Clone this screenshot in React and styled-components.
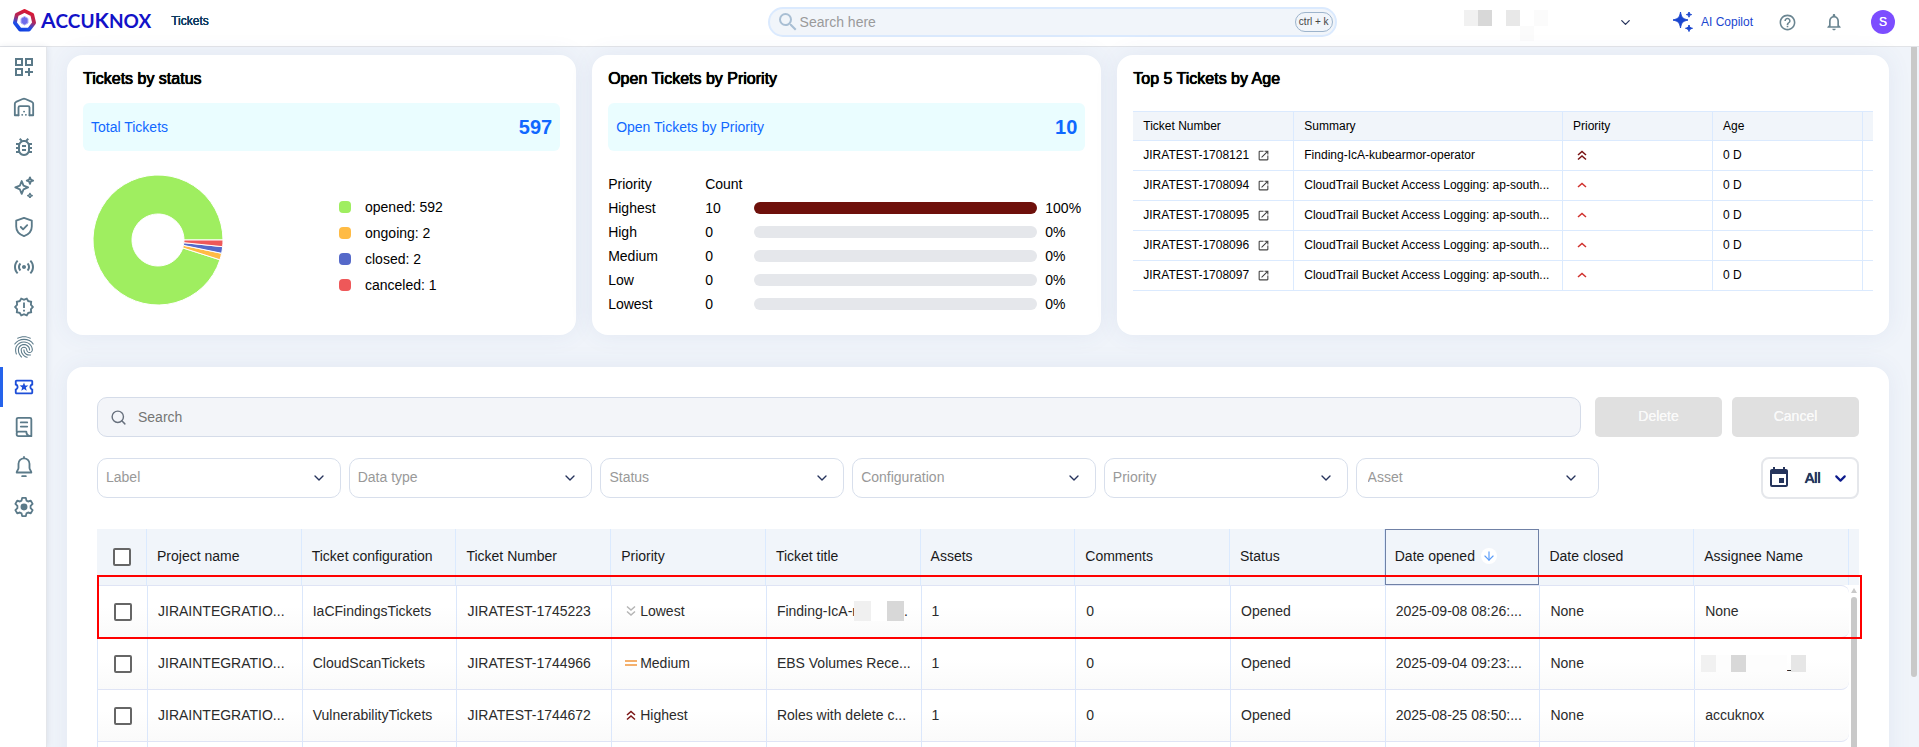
import React from "react";
import styled, { createGlobalStyle } from "styled-components";
import {
  MdOutlineDashboardCustomize,
  MdOutlineBugReport,
  MdSensors,
  MdOutlineNewReleases,
  MdFingerprint,
  MdOutlineLocalActivity,
  MdSearch,
  MdHelpOutline,
  MdNotificationsNone,
  MdOpenInNew,
  MdEvent,
} from "react-icons/md";
import { ChevronDown, Search, ArrowDown } from "lucide-react";

const GlobalStyle = createGlobalStyle`
  *, *::before, *::after { box-sizing: border-box; }
  body {
    margin: 0;
    font-family: "Liberation Sans", Arial, sans-serif;
    font-size: 14px;
    color: #000;
    background: #f0f4fa;
  }
  button, input, select { font: inherit; }
`;

const Page = styled.div`
  display: flex;
  flex-direction: column;
  height: 100vh;
  overflow: hidden;
`;

/* ---------- top bar ---------- */

const TopBar = styled.header`
  display: flex;
  align-items: center;
  flex: none;
  height: 47px;
  padding-bottom: 2px;
  background: #fff;
  border-bottom: 1px solid #e2e4e8;
`;

const BrandArea = styled.div`
  display: flex;
  align-items: center;
  width: 40%;
  padding: 0 0 3px 12px;
`;

const Brand = styled.a`
  display: flex;
  align-items: center;
  gap: 4px;
  color: #1212c8;
  text-decoration: none;
`;

const BrandName = styled.span`
  font: 700 19px/24px Lato, sans-serif;
`;

const BigCap = styled.span`
  font-size: 21px;
`;

const Crumb = styled.span`
  margin-left: 20px;
  font-size: 12px;
  color: #0b3a5e;
  text-shadow: 0 0 0 currentColor, 0 0 0 currentColor;
`;

const GlobalSearch = styled.label`
  display: flex;
  align-items: center;
  flex: 0 1 569px;
  height: 30px;
  padding: 0 2px 0 6px;
  border: 2px solid #dbeafe;
  border-radius: 15px;
  background: #f1f5fa;
  color: #a9bfd4;
`;

const BareInput = styled.input`
  flex: 1;
  min-width: 0;
  padding: 0;
  border: 0;
  outline: 0;
  background: transparent;
  color: #222;
  font-size: 14px;
  &::placeholder {
    color: ${(p) => p.$hint};
    opacity: 1;
  }
`;

const Shortcut = styled.kbd`
  height: 20px;
  padding: 0 3px;
  border: 1px solid #9db4cc;
  border-radius: 10px;
  font: 10px/17px "Liberation Sans", Arial, sans-serif;
  color: #444;
`;

const TopRight = styled.div`
  display: flex;
  align-items: center;
  justify-content: flex-end;
  flex: 1;
  padding-right: 24px;
`;

const PlainButton = styled.button`
  display: flex;
  align-items: center;
  padding: 0;
  border: 0;
  background: none;
  cursor: pointer;
  color: ${(p) => p.$color || "#6a8591"};
`;

const Tenant = styled(PlainButton)`
  gap: 70px;
  margin-right: 40px;
`;

const Mosaic = styled.span`
  display: grid;
  grid-template-columns: repeat(6, 14px);
  grid-template-rows: 16px 15px;
  gap: 0;
  margin-top: 7px;
`;

const Tile = styled.span`
  grid-column: ${(p) => p.$col};
  grid-row: ${(p) => p.$row || 1};
  background: ${(p) => p.$tone};
`;

const Copilot = styled(PlainButton)`
  gap: 8px;
  margin-right: 25px;
  font-size: 12px;
`;

const IconGroup = styled.div`
  display: flex;
  align-items: center;
  gap: 27px;
`;

const Avatar = styled.button`
  width: 24px;
  height: 24px;
  padding: 0;
  border: 0;
  border-radius: 50%;
  background: #7c4dff;
  color: #fff;
  font-size: 12px;
  text-shadow: 0 0 0 currentColor;
`;

/* ---------- shell ---------- */

const Body = styled.div`
  display: flex;
  flex: 1;
  min-height: 0;
`;

const SideNav = styled.nav`
  display: flex;
  flex-direction: column;
  flex: none;
  width: 47px;
  background: #fff;
  border-right: 1px solid #e4e6ea;
  box-shadow: 0 0 6px rgba(40, 60, 100, 0.12);
`;

const NavItem = styled.a`
  display: flex;
  align-items: center;
  justify-content: center;
  height: 40px;
  padding-right: 2px;
  border-left: 3px solid ${(p) => (p.$active ? "#2563eb" : "transparent")};
  color: ${(p) => (p.$active ? "#1d4ed8" : "#5b7a89")};
`;

const Main = styled.main`
  display: flex;
  flex-direction: column;
  gap: 32px;
  flex: 1;
  min-width: 0;
  padding: 8px 22px 0 20px;
`;

const PageScroll = styled.div`
  flex: none;
  width: 8px;
  padding-right: 2px;
`;

const PageThumb = styled.div`
  height: 90%;
  border-radius: 0 0 3px 3px;
  background: #c9c9c9;
`;

const Cards = styled.div`
  display: grid;
  grid-template-columns: repeat(7, minmax(0, 1fr));
  gap: 16px;
`;

const Panel = styled.section`
  background: #fff;
  border-radius: 16px;
  box-shadow: 0 0 24px rgba(70, 90, 150, 0.08);
`;

const Card = styled(Panel)`
  grid-column: span ${(p) => p.$span};
  min-height: 280px;
  padding: 16px;
`;

const CardTitle = styled.h2`
  margin: 0;
  font-size: 16px;
  line-height: 16px;
  font-weight: 400;
  text-shadow: 0 0 0 currentColor, 0 0 0 currentColor, 0 0 1px currentColor;
`;

const Band = styled.div`
  display: flex;
  align-items: center;
  justify-content: space-between;
  height: 48px;
  margin-top: 16px;
  padding: 0 8px;
  border-radius: 6px;
  background: #eafdff;
  color: #1068ff;
`;

const BandTotal = styled.strong`
  font-size: 20px;
  font-weight: 700;
`;

const ChartRow = styled.div`
  display: flex;
  margin-top: 24px;
  padding-left: 10px;
  gap: 116px;
`;

const Legend = styled.ul`
  margin: 0;
  padding: 19px 0 0;
  list-style: none;
`;

const LegendItem = styled.li`
  display: flex;
  align-items: center;
  gap: 14px;
  height: 26px;
`;

const Swatch = styled.span`
  width: 12px;
  height: 12px;
  border-radius: 4px;
  background: ${(p) => p.$color};
`;

const PriorityTable = styled.table`
  width: 100%;
  margin-top: 21px;
  table-layout: fixed;
  border-spacing: 0;
  th, td {
    height: 24px;
    padding: 0;
    text-align: left;
    font-weight: 400;
  }
`;

const Col = styled.col`
  width: ${(p) => p.$w};
`;

const Track = styled.div`
  height: 12px;
  border-radius: 6px;
  background: #e5e7eb;
  overflow: hidden;
`;

const Fill = styled.div`
  height: 100%;
  background: #6e100b;
`;

const AgeTable = styled.table`
  width: 100%;
  margin-top: 24px;
  table-layout: fixed;
  border-spacing: 0;
  border-top: 1px solid #dbeafe;
  font-size: 12px;
  th, td {
    height: 30px;
    padding: 0 0 1px 10px;
    border-right: 1px solid #dbeafe;
    border-bottom: 1px solid #dbeafe;
    text-align: left;
    font-weight: 400;
    white-space: nowrap;
  }
  th { height: 29px; background: #f1f5fa; }
  th:last-child, td:last-child { border-right: 0; padding: 0; }
`;

const TicketLink = styled.a`
  display: flex;
  align-items: center;
  gap: 8px;
  color: #000;
  text-decoration: none;
  svg { color: #444; }
`;

/* ---------- ticket list ---------- */

const ListPanel = styled(Panel)`
  flex: none;
  padding: 30px;
`;

const SearchRow = styled.div`
  display: flex;
  gap: 10px;
`;

const ListSearch = styled.label`
  display: flex;
  align-items: center;
  gap: 11px;
  flex: 1;
  height: 40px;
  margin-right: 4px;
  padding: 0 12px;
  border: 1px solid #d5dce9;
  border-radius: 10px;
  background: #f3f5f9;
  color: #67707d;
`;

const ActionButton = styled.button`
  width: 127px;
  height: 40px;
  padding-bottom: 3px;
  border: 0;
  border-radius: 5px;
  background: #e0e0e0;
  color: #fafafa;
  text-shadow: 0 0 0 currentColor;
`;

const FilterRow = styled.div`
  display: grid;
  grid-template-columns: repeat(7, minmax(0, 1fr));
  align-items: center;
  margin-top: 20px;
`;

const SelectBox = styled.div`
  display: grid;
  grid-template-columns: 1fr ${(p) => p.$inset};
  align-items: center;
  margin-right: 8px;
  color: #26335c;
  svg { grid-area: 1 / 2; pointer-events: none; }
`;

const Select = styled.select`
  grid-area: 1 / 1 / 2 / 3;
  width: 100%;
  height: 40px;
  padding: 0 ${(p) => p.$pad} 2px;
  border: 1px solid #d8dfec;
  border-radius: 10px;
  appearance: none;
  background: #fff;
  color: #999;
`;

const RangeButton = styled.button`
  display: flex;
  align-items: center;
  justify-self: end;
  width: 98px;
  height: 42px;
  padding: 0 8px 0 4px;
  border: 2px solid #e5e7eb;
  border-radius: 8px;
  background: #fff;
  color: #25345c;
  text-shadow: 0 0 0 currentColor, 0 0 0 currentColor, 0 0 1px currentColor;
`;

const RangeText = styled.span`
  flex: 1;
  padding-left: 14px;
  text-align: left;
`;

const TableWrap = styled.div`
  position: relative;
  margin-top: 30px;
`;

const TicketTable = styled.table`
  width: 100%;
  table-layout: fixed;
  border-spacing: 0;
  th, td {
    padding: 0 0 0 10px;
    text-align: left;
    font-weight: 400;
    white-space: nowrap;
  }
  th {
    height: 56px;
    padding-bottom: 2px;
    background: #f1f5fa;
    border-right: 1px solid #dbeafe;
    color: #1a1a1a;
  }
  th:last-child { border-right: 0; padding: 0; }
  td {
    height: 52px;
    padding-bottom: 1px;
    border-left: 1px solid #dbe7fb;
    border-bottom: 1px solid #dfe4f5;
    background: linear-gradient(#fff 40%, #fafafa);
    color: #2b2b2b;
  }
  tbody tr:first-child td { border-top: 1px solid #dfe4f5; height: 53px; }
  th:first-child, td:first-child { padding: 0 0 0 16px; }
  td:nth-last-child(2) { border-radius: 0 8px 8px 0; }
  tbody tr td:last-child { border: 0; padding: 0; background: #fff; }
`;

const SortedTh = styled.th`
  outline: 1px solid #7081a6;
  outline-offset: -1px;
`;

const SortLabel = styled.span`
  display: flex;
  align-items: center;
  gap: 6px;
`;

const SortDot = styled.span`
  display: flex;
  align-items: center;
  justify-content: center;
  width: 16px;
  height: 16px;
  border-radius: 50%;
  background: #fff;
  color: #5a9cf8;
`;

const Tick = styled.input`
  display: block;
  width: 18px;
  height: 18px;
  margin: 0;
  appearance: none;
  border: 2px solid #666;
  border-radius: 2px;
  background: #fff;
`;

const PriorityCell = styled.span`
  display: flex;
  align-items: center;
  gap: 3px;
  padding-left: 3px;
`;

const Redacted = styled.span`
  display: flex;
  align-items: center;
`;

const CoverTile = styled.span`
  position: relative;
  flex: none;
  width: ${(p) => p.$w};
  height: ${(p) => p.$h};
  margin-left: ${(p) => p.$lap || "0"};
  background: ${(p) => p.$tone};
`;

const RowMarker = styled.div`
  position: absolute;
  top: 46px;
  left: 0;
  right: -3px;
  height: 64px;
  border: 2px solid #f00;
  pointer-events: none;
`;

const ListScroll = styled.div`
  position: absolute;
  top: 59px;
  right: 2px;
  bottom: 0;
  width: 6px;
  display: flex;
  flex-direction: column;
  gap: 4px;
`;

const ListThumb = styled.div`
  flex: 1;
  border-radius: 3px;
  background: #c9c9c9;
`;

const ScrollArrow = styled.div`
  border: 3px solid transparent;
  border-top: 0;
  border-bottom: 5px solid #c9c9c9;
`;

/* ---------- drawings ---------- */

const Line = ({ size = 22, w = 2, children }) => (
  <svg width={size} height={size} viewBox="0 0 24 24" fill="none" stroke="currentColor" strokeWidth={w} strokeLinecap="round" strokeLinejoin="round" aria-hidden="true">
    {children}
  </svg>
);

const Garage = () => (
  <Line w={2}>
    <path d="M6 21H2V8.500C2 7.600 2.500 6.900 3.300 6.500L10.500 3.300a4 4 0 0 1 3 0L20.700 6.500C21.500 6.900 22 7.600 22 8.500V21h-4" />
    <path d="M6 21v-8.500A1.500 1.500 0 0 1 7.500 11h9a1.500 1.500 0 0 1 1.500 1.500V21" />
    <path d="M10 20.500h.1M14 20.500h.1M12 17h.1" />
  </Line>
);

const Sparkles = () => (
  <Line w={2}>
    <path d="M9.500 5.500l2 5 5 2-5 2-2 5-2-5-5-2 5-2z" />
    <path d="M18.500 1.500l1 2.500 2.500 1-2.500 1-1 2.500-1-2.500-2.500-1 2.500-1z" />
    <path d="M18.500 19l.8 1.700 1.700.8-1.700.8-.8 1.700-.8-1.700-1.700-.8 1.700-.8z" strokeWidth="1.500" />
  </Line>
);

const Shield = () => (
  <Line w={2}>
    <path d="M12 2l8.500 3v6.500c0 5-3.500 8.700-8.500 10.500-5-1.800-8.500-5.500-8.500-10.500V5z" />
    <path d="M8.500 12l2.500 2.500 4.500-4.500" />
  </Line>
);

const Report = () => (
  <Line w={2}>
    <path d="M4 17V3.500A1.500 1.500 0 0 1 5.500 2h13A1.500 1.500 0 0 1 20 3.500V22H6a2 2 0 0 1-2-2v-1a2 2 0 0 1 2-2h8.500c0 3 2 5 5.500 5" />
    <path d="M8.500 7h7M8.500 11.500h7" />
  </Line>
);

const NavBell = () => (
  <Line w={2}>
    <path d="M12 1v1.500M12 2.500a6 6 0 0 0-6 6V13c0 2-2 3-2 5h16c0-2-2-3-2-5V8.500a6 6 0 0 0-6-6zM10 22h4" />
  </Line>
);

const Gear = () => (
  <Line w={2}>
    <path d="M10 2h4l.7 3 1.800 1 2.900-.9 2 3.500-2.200 2.100v2.600l2.200 2.100-2 3.500-2.900-.9-1.800 1-.7 3h-4l-.7-3-1.800-1-2.900.9-2-3.500 2.200-2.100v-2.600L2.600 8.600l2-3.500 2.900.9 1.800-1z" />
    <circle cx="12" cy="12" r="2.800" fill="currentColor" />
  </Line>
);

const CopilotMark = () => (
  <svg width="20" height="20" viewBox="0 0 20 20" fill="currentColor" aria-hidden="true">
    <path d="M7.500 0C8.300 5 9.500 6.700 15 8 9.500 9.300 8.300 11 7.500 16 6.700 11 5.500 9.300 0 8 5.500 6.700 6.700 5 7.500 0z" stroke="currentColor" strokeLinejoin="round" />
    <path d="M16 0c.4 1.700.9 2.200 2.600 2.600C16.900 3 16.400 3.500 16 5.200 15.600 3.500 15.100 3 13.400 2.600 15.100 2.200 15.600 1.700 16 0z" stroke="currentColor" strokeLinejoin="round" />
    <path d="M16 13c.6 2.200 1.200 2.800 3.500 3.300-2.300.5-2.900 1.100-3.500 3.200-.6-2.100-1.200-2.700-3.500-3.200 2.300-.5 2.900-1.100 3.500-3.300z" stroke="currentColor" strokeLinejoin="round" />
  </svg>
);

const Logo = () => (
  <svg width="25" height="25" viewBox="0 0 25 25" fill="none" aria-hidden="true">
    <defs>
      <linearGradient id="ring" x1="17" y1="2" x2="9" y2="23" gradientUnits="userSpaceOnUse">
        <stop offset="0" stopColor="#e0142c" />
        <stop offset="0.45" stopColor="#b0285c" />
        <stop offset="0.75" stopColor="#1f4fe8" />
        <stop offset="1" stopColor="#0f3fe0" />
      </linearGradient>
    </defs>
    <path d="M12.500 2.900l7.700 3.700 1.900 8.200-5.200 6.900H8.100l-5.200-6.900 1.900-8.200z" stroke="url(#ring)" strokeWidth="3.800" strokeLinejoin="round" />
    <path d="M12.500 8.500l3.500 2v4.500l-3.500 2-3.500-2v-4.500z" fill="#6f6bea" stroke="#b3b0f6" strokeWidth="1" />
  </svg>
);

const priorityMarks = {
  Highest: { color: "#7a1414", d: ["M2 6l4-3.500L10 6", "M2 10.500L6 7l4 3.500"] },
  High: { color: "#d0312d", d: ["M2 8l4-3.500L10 8"] },
  Medium: { color: "#f0963c", d: ["M0 4h12", "M0 8h12"] },
  Lowest: { color: "#b5b5b5", d: ["M2 1.500L6 5l4-3.500", "M2 6.500L6 10l4-3.500"] },
};

const PriorityMark = ({ level }) => (
  <svg width="12" height="12" viewBox="0 0 12 12" fill="none" stroke={priorityMarks[level].color} strokeWidth="1.500" role="img" aria-label={level}>
    {priorityMarks[level].d.map((d) => (
      <path key={d} d={d} />
    ))}
  </svg>
);

const point = (r, deg) => {
  const a = (deg * Math.PI) / 180;
  return `${65 + r * Math.cos(a)} ${65 + r * Math.sin(a)}`;
};

const arc = (from, to) => {
  const large = to - from > 180 ? 1 : 0;
  return `M${point(65, from)}A65 65 0 ${large} 1 ${point(65, to)}L${point(26, to)}A26 26 0 ${large} 0 ${point(26, from)}Z`;
};

/* ---------- data ---------- */

const statuses = [
  { label: "opened: 592", color: "#9fee60", from: 17.7, to: 360 },
  { label: "ongoing: 2", color: "#ffbb44", from: 11.8, to: 17.7 },
  { label: "closed: 2", color: "#5569c9", from: 5.9, to: 11.8 },
  { label: "canceled: 1", color: "#ee5859", from: 0, to: 5.9 },
];

const priorities = [
  ["Highest", 10, 100],
  ["High", 0, 0],
  ["Medium", 0, 0],
  ["Low", 0, 0],
  ["Lowest", 0, 0],
];

const trail = "CloudTrail Bucket Access Logging: ap-south...";
const oldest = [
  ["JIRATEST-1708121", "Finding-IcA-kubearmor-operator", "Highest"],
  ["JIRATEST-1708094", trail, "High"],
  ["JIRATEST-1708095", trail, "High"],
  ["JIRATEST-1708096", trail, "High"],
  ["JIRATEST-1708097", trail, "High"],
];

const navItems = [
  ["Dashboard", <MdOutlineDashboardCustomize size={24} />],
  ["Inventory", <Garage />],
  ["Issues", <MdOutlineBugReport size={24} />],
  ["AI security", <Sparkles />],
  ["Compliance", <Shield />],
  ["Runtime", <MdSensors size={24} />],
  ["Alerts", <MdOutlineNewReleases size={22} />],
  ["Identity", <MdFingerprint size={26} />],
  ["Tickets", <MdOutlineLocalActivity size={22} />],
  ["Reports", <Report />],
  ["Notifications", <NavBell />],
  ["Settings", <Gear />],
];

const filters = ["Label", "Data type", "Status", "Configuration", "Priority", "Asset"];

const project = "JIRAINTEGRATIO...";
const tickets = [
  [project, "IaCFindingsTickets", "JIRATEST-1745223", "Lowest", null, "2025-09-08 08:26:...", "None"],
  [project, "CloudScanTickets", "JIRATEST-1744966", "Medium", "EBS Volumes Rece...", "2025-09-04 09:23:...", null],
  [project, "VulnerabilityTickets", "JIRATEST-1744672", "Highest", "Roles with delete c...", "2025-08-25 08:50:...", "accuknox"],
];

const HiddenTitle = () => (
  <Redacted>
    Finding-IcA-r
    <CoverTile $w="17px" $h="20px" $lap="-3px" $tone="#f0f0f0" />
    <CoverTile $w="16px" $h="20px" $tone="#fff" />
    <CoverTile $w="17px" $h="20px" $tone="#d8d8d8" />
    .
  </Redacted>
);

const HiddenName = () => (
  <Redacted>
    <CoverTile $w="15px" $h="17px" $lap="-4px" $tone="#f1f1f1" />
    <CoverTile $w="15px" $h="17px" $tone="#fdfdfd" />
    <CoverTile $w="15px" $h="17px" $tone="#d8d8d8" />
    <CoverTile $w="41px" $h="17px" $tone="#fdfdfd" />
    _
    <CoverTile $w="15px" $h="17px" $lap="-4px" $tone="#e6e6e6" />
  </Redacted>
);

export default function App() {
  return (
    <Page>
      <GlobalStyle />
      <TopBar>
        <BrandArea>
          <Brand href="#home">
            <Logo />
            <BrandName>
              <BigCap>A</BigCap>CCU<BigCap>K</BigCap>NOX
            </BrandName>
          </Brand>
          <Crumb>Tickets</Crumb>
        </BrandArea>
        <GlobalSearch>
          <MdSearch size={24} />
          <BareInput $hint="#9a9a9a" type="search" placeholder="Search here" aria-label="Search everywhere" />
          <Shortcut>ctrl + k</Shortcut>
        </GlobalSearch>
        <TopRight>
          <Tenant type="button" aria-label="Select tenant" $color="#26335c">
            <Mosaic>
              <Tile $col={1} $tone="#f1f1f1" />
              <Tile $col={2} $tone="#d8d8d8" />
              <Tile $col={4} $tone="#e8e8e8" />
              <Tile $col={6} $tone="#fbfbfb" />
              <Tile $col={5} $row={2} $tone="#fbfbfb" />
            </Mosaic>
            <ChevronDown size={15} />
          </Tenant>
          <Copilot type="button" $color="#1a46cf">
            <CopilotMark />
            AI Copilot
          </Copilot>
          <IconGroup>
            <PlainButton type="button" aria-label="Help"><MdHelpOutline size={19} /></PlainButton>
            <PlainButton type="button" aria-label="Notifications"><MdNotificationsNone size={20} /></PlainButton>
            <Avatar type="button" aria-label="Account S">S</Avatar>
          </IconGroup>
        </TopRight>
      </TopBar>

      <Body>
        <SideNav aria-label="Main">
          {navItems.map(([name, icon]) => (
            <NavItem key={name} href={`#${name}`} aria-label={name} $active={name === "Tickets"}>
              {icon}
            </NavItem>
          ))}
        </SideNav>

        <Main>
          <Cards>
            <Card $span={2}>
              <CardTitle>Tickets by status</CardTitle>
              <Band>
                <span>Total Tickets</span>
                <BandTotal>597</BandTotal>
              </Band>
              <ChartRow>
                <svg width="130" height="130" viewBox="0 0 130 130" role="img" aria-label="Tickets by status">
                  {statuses.map((s) => (
                    <path key={s.label} d={arc(s.from, s.to)} fill={s.color} stroke="#fff" />
                  ))}
                </svg>
                <Legend>
                  {statuses.map((s) => (
                    <LegendItem key={s.label}>
                      <Swatch $color={s.color} />
                      {s.label}
                    </LegendItem>
                  ))}
                </Legend>
              </ChartRow>
            </Card>

            <Card $span={2}>
              <CardTitle>Open Tickets by Priority</CardTitle>
              <Band>
                <span>Open Tickets by Priority</span>
                <BandTotal>10</BandTotal>
              </Band>
              <PriorityTable>
                <colgroup>
                  <Col $w="97px" />
                  <Col $w="49px" />
                  <Col />
                  <Col $w="8px" />
                  <Col $w="40px" />
                </colgroup>
                <thead>
                  <tr>
                    <th>Priority</th>
                    <th>Count</th>
                    <th colSpan={3} aria-label="Share" />
                  </tr>
                </thead>
                <tbody>
                  {priorities.map(([name, count, share]) => (
                    <tr key={name}>
                      <td>{name}</td>
                      <td>{count}</td>
                      <td>
                        <Track>
                          <Fill style={{ width: `${share}%` }} />
                        </Track>
                      </td>
                      <td />
                      <td>{share}%</td>
                    </tr>
                  ))}
                </tbody>
              </PriorityTable>
            </Card>

            <Card $span={3}>
              <CardTitle>Top 5 Tickets by Age</CardTitle>
              <AgeTable>
                <colgroup>
                  <Col $w="161px" />
                  <Col />
                  <Col $w="150px" />
                  <Col $w="150px" />
                  <Col $w="10px" />
                </colgroup>
                <thead>
                  <tr>
                    <th>Ticket Number</th>
                    <th>Summary</th>
                    <th>Priority</th>
                    <th>Age</th>
                    <th aria-hidden="true" />
                  </tr>
                </thead>
                <tbody>
                  {oldest.map(([id, summary, level]) => (
                    <tr key={id}>
                      <td>
                        <TicketLink href={`#${id}`}>
                          {id}
                          <MdOpenInNew size={13} />
                        </TicketLink>
                      </td>
                      <td>{summary}</td>
                      <td>
                        <PriorityCell>
                          <PriorityMark level={level} />
                        </PriorityCell>
                      </td>
                      <td>0 D</td>
                      <td aria-hidden="true" />
                    </tr>
                  ))}
                </tbody>
              </AgeTable>
            </Card>
          </Cards>

          <ListPanel>
            <SearchRow>
              <ListSearch>
                <Search size={17} />
                <BareInput $hint="#757575" type="search" placeholder="Search" aria-label="Search tickets" />
              </ListSearch>
              <ActionButton type="button" disabled>Delete</ActionButton>
              <ActionButton type="button" disabled>Cancel</ActionButton>
            </SearchRow>

            <FilterRow>
              {filters.map((name) => (
                <SelectBox key={name} $inset={name === "Asset" ? "36px" : "30px"}>
                  <Select aria-label={name} defaultValue="" $pad={name === "Asset" ? "11px" : "8px"}>
                    <option value="">{name}</option>
                  </Select>
                  <ChevronDown size={16} />
                </SelectBox>
              ))}
              <RangeButton type="button">
                <MdEvent size={24} />
                <RangeText>All</RangeText>
                <ChevronDown size={17} strokeWidth={3} color="#0d1b8c" />
              </RangeButton>
            </FilterRow>

            <TableWrap>
              <TicketTable>
                <colgroup>
                  <Col $w="50px" />
                  {Array.from({ length: 11 }, (_, i) => (
                    <Col key={i} />
                  ))}
                  <Col $w="10px" />
                </colgroup>
                <thead>
                  <tr>
                    <th><Tick type="checkbox" aria-label="Select all tickets" /></th>
                    <th>Project name</th>
                    <th>Ticket configuration</th>
                    <th>Ticket Number</th>
                    <th>Priority</th>
                    <th>Ticket title</th>
                    <th>Assets</th>
                    <th>Comments</th>
                    <th>Status</th>
                    <SortedTh aria-sort="descending">
                      <SortLabel>
                        Date opened
                        <SortDot><ArrowDown size={14} /></SortDot>
                      </SortLabel>
                    </SortedTh>
                    <th>Date closed</th>
                    <th>Assignee Name</th>
                    <th aria-hidden="true" />
                  </tr>
                </thead>
                <tbody>
                  {tickets.map(([proj, config, id, level, title, opened, assignee]) => (
                    <tr key={id}>
                      <td><Tick type="checkbox" aria-label={`Select ${id}`} /></td>
                      <td>{proj}</td>
                      <td>{config}</td>
                      <td>{id}</td>
                      <td>
                        <PriorityCell>
                          <PriorityMark level={level} />
                          {level}
                        </PriorityCell>
                      </td>
                      <td>{title || <HiddenTitle />}</td>
                      <td>1</td>
                      <td>0</td>
                      <td>Opened</td>
                      <td>{opened}</td>
                      <td>None</td>
                      <td>{assignee || <HiddenName />}</td>
                      <td aria-hidden="true" />
                    </tr>
                  ))}
                  <tr>
                    {Array.from({ length: 13 }, (_, i) => (
                      <td key={i} />
                    ))}
                  </tr>
                </tbody>
              </TicketTable>
              <ListScroll aria-hidden="true">
                <ScrollArrow />
                <ListThumb />
              </ListScroll>
              <RowMarker />
            </TableWrap>
          </ListPanel>
        </Main>
        <PageScroll aria-hidden="true">
          <PageThumb />
        </PageScroll>
      </Body>
    </Page>
  );
}
